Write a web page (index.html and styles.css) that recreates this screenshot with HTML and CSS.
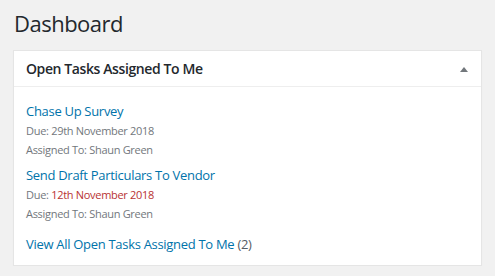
FILE: index.html
```html
<!DOCTYPE html>
<html>
<head>
<meta charset="utf-8">
<link rel="stylesheet" href="styles.css">
</head>
<body>
<h1 class="page-title">Dashboard</h1>
<div class="postbox">
  <div class="postbox-header">
    <h2 class="postbox-title">Open Tasks Assigned To Me</h2>
    <span class="toggle-arrow"></span>
  </div>
  <div class="postbox-body">
    <div class="task">
      <a class="task-link" href="#">Chase Up Survey</a>
      <div class="task-meta">Due: 29th November 2018</div>
      <div class="task-meta">Assigned To: Shaun Green</div>
    </div>
    <div class="task">
      <a class="task-link" href="#">Send Draft Particulars To Vendor</a>
      <div class="task-meta">Due: <span class="overdue">12th November 2018</span></div>
      <div class="task-meta">Assigned To: Shaun Green</div>
    </div>
    <div class="view-all"><a class="task-link" href="#">View All Open Tasks Assigned To Me</a> <span class="count">(2)</span></div>
  </div>
</div>
</body>
</html>
```
FILE: styles.css
```css
html, body {
  margin: 0;
  background: #f1f1f1;
}
body {
  padding: 9px 13px 0 13px;
  font-family: "Open Sans", "Noto Sans", sans-serif;
  color: #23282d;
}
.page-title {
  margin: 0 0 12px 1px;
  font-size: 22px;
  font-weight: 400;
  line-height: 29px;
  letter-spacing: -0.5px;
  color: #23282d;
}
.postbox {
  background: #fff;
  border: 1px solid #e5e5e5;
  box-shadow: 0 1px 1px rgba(0,0,0,0.04);
}
.postbox-header {
  display: flex;
  align-items: center;
  justify-content: space-between;
  padding: 8px 13px 8px 12px;
  border-bottom: 1px solid #eee;
}
.postbox-title {
  margin: 0;
  font-size: 14px;
  font-weight: 600;
  line-height: 19px;
  letter-spacing: -0.4px;
  color: #23282d;
}
.toggle-arrow {
  width: 0;
  height: 0;
  border-left: 4px solid transparent;
  border-right: 4px solid transparent;
  border-bottom: 5px solid #72777c;
  margin-top: 2px;
}
.postbox-body {
  padding: 12px 12px 11px 12px;
}
.task {
  margin-bottom: 4px;
}
.task-link {
  display: inline-block;
  font-size: 13px;
  line-height: 20px;
  letter-spacing: -0.3px;
  color: #0073aa;
  text-decoration: none;
}
.task-meta {
  font-size: 11px;
  line-height: 19px;
  letter-spacing: -0.3px;
  color: #72777c;
}
.overdue {
  color: #b83232;
}
.view-all {
  margin-top: 11px;
  font-size: 13px;
  line-height: 20px;
  letter-spacing: -0.3px;
}
.count {
  color: #555d66;
}
```
